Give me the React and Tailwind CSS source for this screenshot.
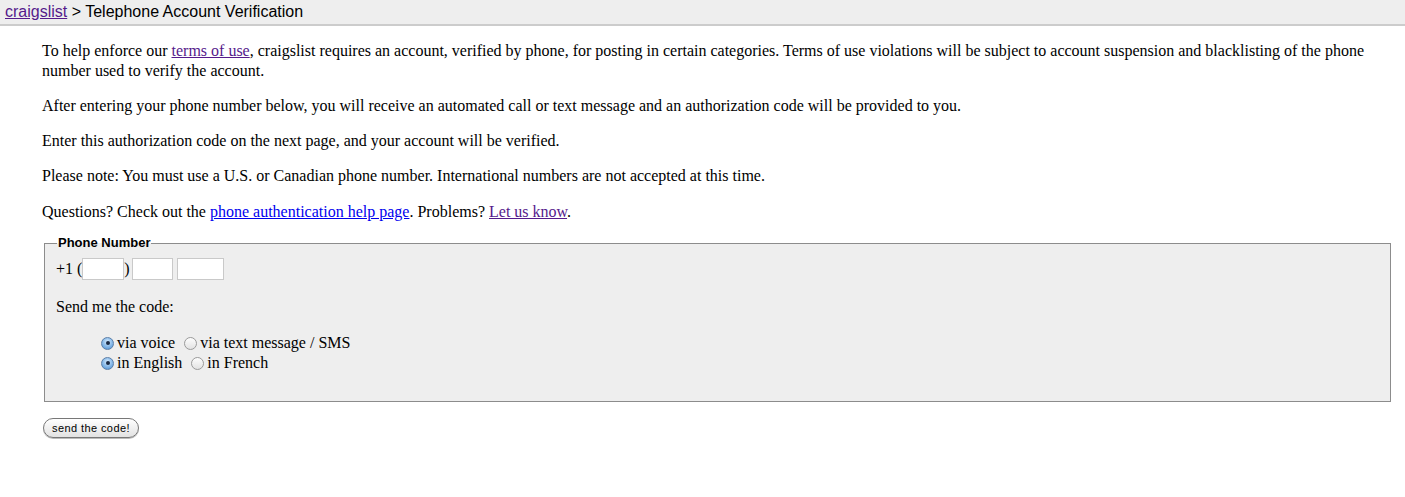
import React, { useState } from "react";

function Radio({ checked, onClick }) {
  return (
    <span
      onClick={onClick}
      className={`inline-flex items-center justify-center w-[13px] h-[13px] rounded-full border mr-[3px] ${
        checked
          ? "border-[#5b7fa8] bg-[radial-gradient(circle_at_50%_35%,#d6ecff,#6fa8e0_70%,#4b83c4)]"
          : "border-[#9a9a9a] bg-[linear-gradient(#fdfdfd,#e2e2e2)]"
      }`}
    >
      {checked && <span className="w-[4px] h-[4px] rounded-full bg-[#1a2a44]" />}
    </span>
  );
}

export default function App() {
  const [via, setVia] = useState("voice");
  const [lang, setLang] = useState("en");
  const serif = { fontFamily: '"Liberation Serif", "Times New Roman", serif' };

  return (
    <div className="min-h-[497px] bg-white text-black">
      <div className="h-[26px] bg-[#eeeeee] border-b-2 border-[#cccccc] pl-[5px] font-['Liberation_Sans',Arial,sans-serif] text-[16px] leading-[23px]">
        <a href="#" className="text-[#551a8b] underline">craigslist</a> &gt; Telephone Account Verification
      </div>

      <div className="pl-[42px] pr-[40px] pt-[15px] text-[16px] leading-[20px]" style={serif}>
        <p>
          To help enforce our <a href="#" className="text-[#551a8b] underline">terms of use</a>, craigslist requires an account, verified by phone, for posting in certain categories. Terms of use violations will be subject to account suspension and blacklisting of the phone number used to verify the account.
        </p>
        <p className="mt-[15px]">After entering your phone number below, you will receive an automated call or text message and an authorization code will be provided to you.</p>
        <p className="mt-[15px]">Enter this authorization code on the next page, and your account will be verified.</p>
        <p className="mt-[15px]">Please note: You must use a U.S. or Canadian phone number. International numbers are not accepted at this time.</p>
        <p className="mt-[16px]">
          Questions? Check out the <a href="#" className="text-[#0000ee] underline">phone authentication help page</a>. Problems? <a href="#" className="text-[#551a8b] underline">Let us know</a>.
        </p>

        <fieldset className="mt-[14px] ml-[2px] mr-[-26px] border border-[#8c8c8c] bg-[#eeeeee] pl-[11px] pr-[12px] pb-[28px]">
          <legend className="font-['Liberation_Sans',Arial,sans-serif] font-bold text-[13px] leading-[14px] px-[1px] ml-[1px]">Phone Number</legend>
          <div className="flex items-center mt-[8px] h-[22px]">
            <span>+1 (</span>
            <input className="w-[42px] h-[22px] bg-white border border-[#c9c9c9] outline-none" />
            <span className="mr-[2px]">)</span>
            <input className="w-[41px] h-[22px] bg-white border border-[#c9c9c9] outline-none mr-[4px]" />
            <input className="w-[47px] h-[22px] bg-white border border-[#c9c9c9] outline-none" />
          </div>
          <p className="mt-[17px]">Send me the code:</p>
          <div className="pl-[45px] mt-[16px]">
            <div className="flex items-center h-[20px]">
              <Radio checked={via === "voice"} onClick={() => setVia("voice")} />
              <span className="mr-[9px]">via voice</span>
              <Radio checked={via === "sms"} onClick={() => setVia("sms")} />
              <span>via text message / SMS</span>
            </div>
            <div className="flex items-center h-[20px]">
              <Radio checked={lang === "en"} onClick={() => setLang("en")} />
              <span className="mr-[9px]">in English</span>
              <Radio checked={lang === "fr"} onClick={() => setLang("fr")} />
              <span>in French</span>
            </div>
          </div>
        </fieldset>

        <button className="mt-[16px] ml-[1px] w-[96px] h-[20px] rounded-full border border-[#777] bg-[linear-gradient(#ffffff,#f0f0f0_50%,#e2e2e2)] font-['Liberation_Sans',Arial,sans-serif] text-[11px] tracking-[0.4px] leading-[18px] shadow-[0_1px_0_#bbb]">
          send the code!
        </button>
      </div>
    </div>
  );
}
